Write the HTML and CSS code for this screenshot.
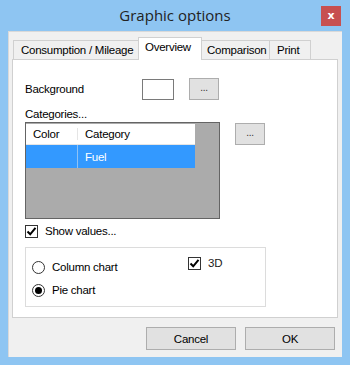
FILE: index.html
```html
<!DOCTYPE html>
<html>
<head>
<meta charset="utf-8">
<link rel="stylesheet" href="styles.css">
</head>
<body>
<div class="window">
  <div class="titlebar">
    <div class="title">Graphic options</div>
    <div class="close">x</div>
  </div>
  <div class="client">
    <div class="tabs">
      <div class="tab t1">Consumption / Mileage</div>
      <div class="tab active t2">Overview</div>
      <div class="tab t3">Comparison</div>
      <div class="tab t4">Print</div>
    </div>
    <div class="panel">
      <div class="row bg-row">
        <span class="lbl">Background</span>
        <span class="swatch"></span>
        <span class="btn small">...</span>
      </div>
      <div class="cat-label">Categories...</div>
      <div class="row list-row">
        <div class="list">
          <div class="lrow head"><span class="c1">Color</span><span class="c2">Category</span></div>
          <div class="lrow sel"><span class="c1"></span><span class="c2">Fuel</span></div>
        </div>
        <span class="btn small b2">...</span>
      </div>
      <div class="row chk-row">
        <span class="check"><svg width="11" height="11" viewBox="0 0 11 11"><path d="M1.5 5.5 L4.2 8.3 L9.5 1.8" fill="none" stroke="#000" stroke-width="2"/></svg></span>
        <span>Show values...</span>
      </div>
      <div class="group">
        <div class="gcol">
          <div class="opt"><span class="radio"></span><span>Column chart</span></div>
          <div class="opt"><span class="radio on"></span><span>Pie chart</span></div>
        </div>
        <div class="gcol g2">
          <div class="opt"><span class="check"><svg width="11" height="11" viewBox="0 0 11 11"><path d="M1.5 5.5 L4.2 8.3 L9.5 1.8" fill="none" stroke="#000" stroke-width="2"/></svg></span><span class="d3">3D</span></div>
        </div>
      </div>
    </div>
    <div class="footer">
      <span class="btn big">Cancel</span>
      <span class="btn big">OK</span>
    </div>
  </div>
</div>
</body>
</html>
```
FILE: styles.css
```css
* { box-sizing: border-box; }
html, body { margin: 0; padding: 0; }
body {
  width: 350px; height: 365px;
  background: #8ec5f2;
  font-family: "Liberation Sans", Arial, sans-serif;
  font-size: 11.5px;
  letter-spacing: -0.25px;
  color: #000;
  overflow: hidden;
}
.window { width: 350px; height: 365px; display: flex; flex-direction: column; }
.titlebar { height: 31px; position: relative; display: flex; justify-content: center; }
.title { font-family: "Open Sans", sans-serif; font-size: 15px; color: #222; padding-top: 5px; letter-spacing: 0; }
.close {
  position: absolute; right: 9px; top: 6px;
  width: 20px; height: 20px;
  background: #c75050; color: #fff;
  font-family: "DejaVu Sans", sans-serif; font-weight: bold; font-size: 11px;
  display: flex; align-items: center; justify-content: center; padding-bottom: 2px;
}
.client {
  margin: 0 8px;
  height: 326px;
  background: #f0f0f0;
  border-top: 1px solid #d9d9d9;
  border-left: 1px solid #d9d9d9;
  display: flex; flex-direction: column;
}
.tabs { display: flex; align-items: flex-end; height: 27px; padding-left: 4px; }
.tab {
  height: 19px; border: 1px solid #d0d0d0; border-bottom: none;
  background: #f0f0f0; padding: 3px 0 0 7px; margin-right: -1px;
  white-space: nowrap;
}
.t1 { width: 126px; }
.t2 { width: 64px; background: #fff; position: relative; z-index: 2; padding-left: 6px; padding-top: 3px; margin-bottom: -1px; height: 23px; }
.t3 { width: 69px; padding-left: 5px; }
.t4 { width: 42px; }
.panel {
  margin-left: 3px; width: 326px; height: 259px;
  background: #fff; border: 1px solid #d0d0d0;
  padding: 18px 0 0 12px;
  display: flex; flex-direction: column;
}
.row { display: flex; align-items: center; }
.lbl { width: 117px; }
.swatch { width: 32px; height: 21px; border: 1px solid #7a7a7a; background: #fff; margin-right: 15px; }
.btn {
  border: 1px solid #adadad; background: #e1e1e1;
  display: flex; align-items: center; justify-content: center;
}
.small { width: 30px; height: 22px; font-size: 10px; padding-bottom: 4px; color: #333; }
.cat-label { margin-top: 6px; height: 16px; line-height: 16px; }
.list-row { align-items: flex-start; }
.list {
  width: 195px; height: 97px; background: #ababab;
  border: 1px solid #646464; padding: 1px 0 0 0;
}
.lrow { display: flex; width: 169px; }
.lrow .c1 { width: 52px; padding-left: 7px; border-right: 1px solid #e5e5e5; }
.lrow .c2 { flex: 1; padding-left: 7px; }
.head { height: 21px; background: #fff; align-items: center; border-bottom: 1px solid #e5e5e5; }
.sel { height: 23px; background: #3399ff; color: #fff; align-items: center; }
.sel .c1 { border-right: 1px solid #8fc2f5; height: 23px; }
.b2 { margin-left: 15px; margin-top: 1px; }
.chk-row { margin-top: 5px; gap: 7px; height: 14px; }
.check {
  flex: none;
  width: 13px; height: 13px; border: 1px solid #333; background: #fff;
  display: flex; align-items: center; justify-content: center;
}
.group {
  margin-top: 9px; width: 241px; height: 60px;
  border: 1px solid #dcdcdc; display: flex; padding: 12px 0 0 6px;
}
.gcol { flex: none; display: flex; flex-direction: column; gap: 9px; width: 156px; }
.g2 { width: 70px; margin-top: -4px; }
.opt { display: flex; align-items: center; gap: 7px; height: 14px; }
.radio {
  flex: none;
  width: 13px; height: 13px; border: 1px solid #333; border-radius: 50%; background: #fff;
  display: flex; align-items: center; justify-content: center;
}
.radio.on::after { content: ""; width: 7px; height: 7px; border-radius: 50%; background: #000; }
.d3 { color: #1a1a1a; }
.footer { display: flex; justify-content: flex-end; gap: 9px; padding-right: 7px; margin-top: 9px; }
.big { width: 90px; height: 23px; }
```
